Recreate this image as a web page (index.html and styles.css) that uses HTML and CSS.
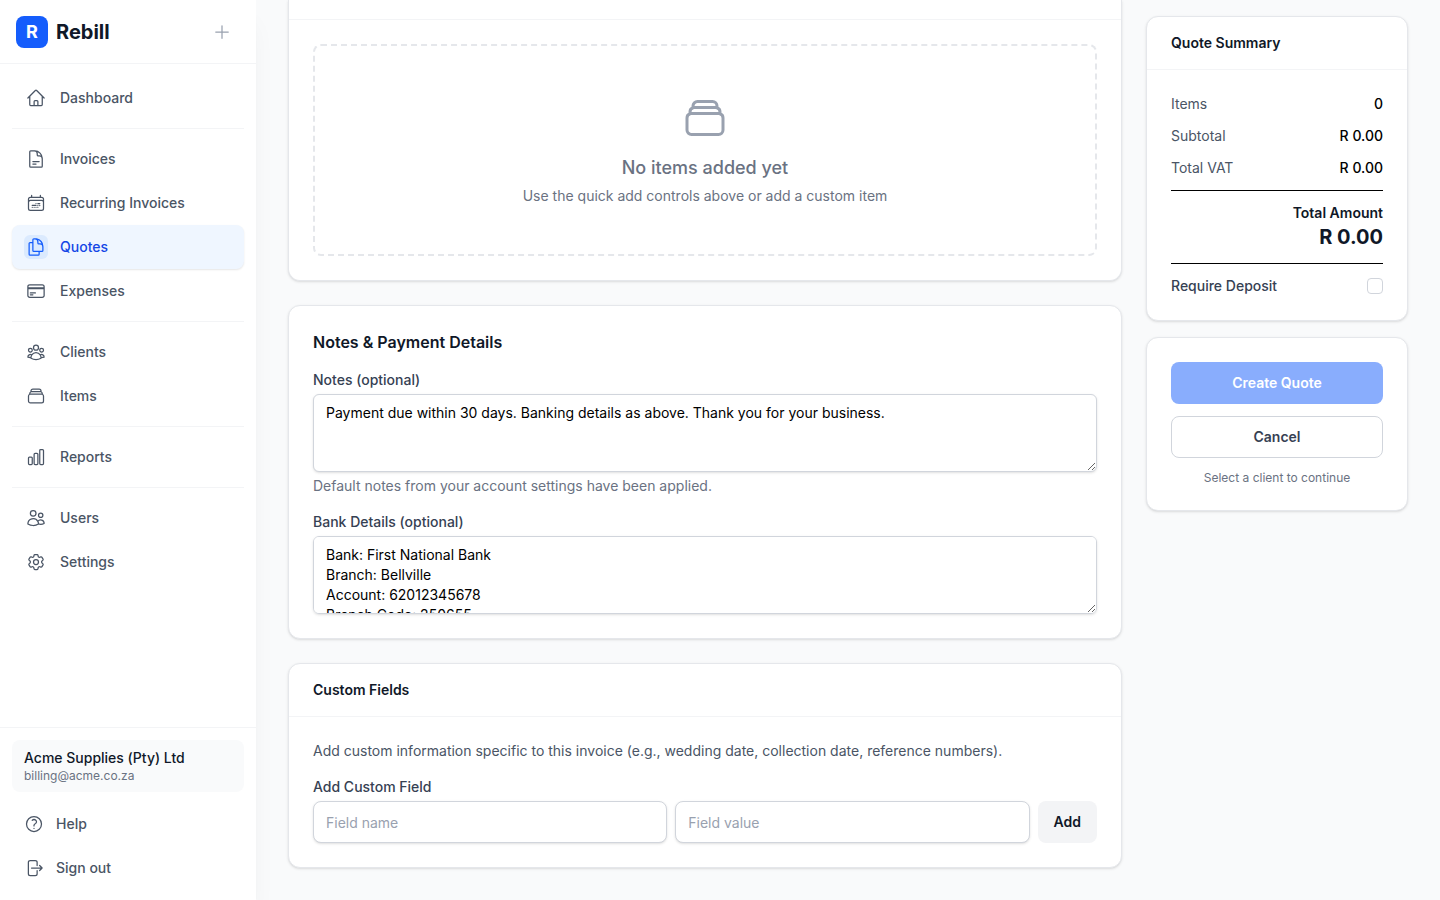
FILE: index.html
```html
<!DOCTYPE html>
<html lang="en">
<head>
    <meta charset="UTF-8">
    <meta name="viewport" content="width=device-width, initial-scale=1.0">
    <title>New Quote - Rebill</title>
    <link rel="stylesheet" href="styles.css">
</head>
<body>
    <div class="layout">
        <!-- Sidebar -->
        <aside class="sidebar">
            <div class="sidebar-header">
                <div class="logo">R</div>
                <span class="brand">Rebill</span>
                <button type="button" class="new-btn" aria-label="Create new">
                    <svg class="icon" viewBox="0 0 24 24"><path d="M12 4.5v15m7.5-7.5h-15"/></svg>
                </button>
            </div>

            <nav class="nav">
                <div class="nav-group">
                    <a href="#" class="nav-link">
                        <span class="nav-icon"><svg class="icon" viewBox="0 0 24 24"><path d="m2.25 12 8.954-8.955c.44-.439 1.152-.439 1.591 0L21.75 12M4.5 9.75v10.125c0 .621.504 1.125 1.125 1.125H9.75v-4.875c0-.621.504-1.125 1.125-1.125h2.25c.621 0 1.125.504 1.125 1.125V21h4.125c.621 0 1.125-.504 1.125-1.125V9.75M8.25 21h8.25"/></svg></span>
                        Dashboard
                    </a>
                </div>
                <div class="nav-group">
                    <a href="#" class="nav-link">
                        <span class="nav-icon"><svg class="icon" viewBox="0 0 24 24"><path d="M19.5 14.25v-2.625a3.375 3.375 0 0 0-3.375-3.375h-1.5A1.125 1.125 0 0 1 13.5 7.125v-1.5a3.375 3.375 0 0 0-3.375-3.375H8.25m0 12.75h7.5m-7.5 3H12M10.5 2.25H5.625c-.621 0-1.125.504-1.125 1.125v17.25c0 .621.504 1.125 1.125 1.125h12.75c.621 0 1.125-.504 1.125-1.125V11.25a9 9 0 0 0-9-9Z"/></svg></span>
                        Invoices
                    </a>
                    <a href="#" class="nav-link">
                        <span class="nav-icon"><svg class="icon" viewBox="0 0 24 24"><path d="M6.75 2.994v2.25m10.5-2.25v2.25m-14.252 13.5V7.491a2.25 2.25 0 0 1 2.25-2.25h13.5a2.25 2.25 0 0 1 2.25 2.25v11.251m-18 0a2.25 2.25 0 0 0 2.25 2.25h13.5a2.25 2.25 0 0 0 2.25-2.25m-18 0v-7.5a2.25 2.25 0 0 1 2.25-2.25h13.5a2.25 2.25 0 0 1 2.25 2.25v7.5m-6.75-6h2.25m-9 2.25h4.5m.002-2.25h.005v.006H12v-.006Zm-.001 4.5h.006v.006h-.006v-.005Zm-2.25.001h.005v.006H9.75v-.006Zm-2.25 0h.005v.005h-.006v-.005Zm6.75-2.247h.005v.005h-.005v-.005Zm0 2.247h.006v.006h-.006v-.006Zm2.25-2.248h.006V15H16.5v-.005Z"/></svg></span>
                        Recurring Invoices
                    </a>
                    <a href="#" class="nav-link active">
                        <span class="nav-icon"><svg class="icon" viewBox="0 0 24 24"><path d="M15.75 17.25v3.375c0 .621-.504 1.125-1.125 1.125h-9.75a1.125 1.125 0 0 1-1.125-1.125V7.875c0-.621.504-1.125 1.125-1.125H6.75a9.06 9.06 0 0 1 1.5.124m7.5 10.376h3.375c.621 0 1.125-.504 1.125-1.125V11.25c0-4.46-3.243-8.161-7.5-8.876a9.06 9.06 0 0 0-1.5-.124H9.375c-.621 0-1.125.504-1.125 1.125v3.5m7.5 10.375H9.375a1.125 1.125 0 0 1-1.125-1.125v-9.25m12 6.625v-1.875a3.375 3.375 0 0 0-3.375-3.375h-1.5a1.125 1.125 0 0 1-1.125-1.125v-1.5a3.375 3.375 0 0 0-3.375-3.375H9.75"/></svg></span>
                        Quotes
                    </a>
                    <a href="#" class="nav-link">
                        <span class="nav-icon"><svg class="icon" viewBox="0 0 24 24"><path d="M2.25 8.25h19.5M2.25 9h19.5m-16.5 5.25h6m-6 2.25h3m-3.75 3h15a2.25 2.25 0 0 0 2.25-2.25V6.75A2.25 2.25 0 0 0 19.5 4.5h-15a2.25 2.25 0 0 0-2.25 2.25v10.5A2.25 2.25 0 0 0 4.5 19.5Z"/></svg></span>
                        Expenses
                    </a>
                </div>
                <div class="nav-group">
                    <a href="#" class="nav-link">
                        <span class="nav-icon"><svg class="icon" viewBox="0 0 24 24"><path d="M18 18.72a9.094 9.094 0 0 0 3.741-.479 3 3 0 0 0-4.682-2.72m.94 3.198.001.031c0 .225-.012.447-.037.666A11.944 11.944 0 0 1 12 21c-2.17 0-4.207-.576-5.963-1.584A6.062 6.062 0 0 1 6 18.719m12 0a5.971 5.971 0 0 0-.941-3.197m0 0A5.995 5.995 0 0 0 12 12.75a5.995 5.995 0 0 0-5.058 2.772m0 0a3 3 0 0 0-4.681 2.72 8.986 8.986 0 0 0 3.74.477m.94-3.197a5.971 5.971 0 0 0-.94 3.197M15 6.75a3 3 0 1 1-6 0 3 3 0 0 1 6 0Zm6 3a2.25 2.25 0 1 1-4.5 0 2.25 2.25 0 0 1 4.5 0Zm-13.5 0a2.25 2.25 0 1 1-4.5 0 2.25 2.25 0 0 1 4.5 0Z"/></svg></span>
                        Clients
                    </a>
                    <a href="#" class="nav-link">
                        <span class="nav-icon"><svg class="icon" viewBox="0 0 24 24"><path d="M6 6.878V6a2.25 2.25 0 0 1 2.25-2.25h7.5A2.25 2.25 0 0 1 18 6v.878m-12 0c.235-.083.487-.128.75-.128h10.5c.263 0 .515.045.75.128m-12 0A2.25 2.25 0 0 0 4.5 9v.878m13.5-3A2.25 2.25 0 0 1 19.5 9v.878m0 0a2.246 2.246 0 0 0-.75-.128H5.25c-.263 0-.515.045-.75.128m15 0A2.25 2.25 0 0 1 21 12v6a2.25 2.25 0 0 1-2.25 2.25H5.25A2.25 2.25 0 0 1 3 18v-6c0-.98.626-1.813 1.5-2.122"/></svg></span>
                        Items
                    </a>
                </div>
                <div class="nav-group">
                    <a href="#" class="nav-link">
                        <span class="nav-icon"><svg class="icon" viewBox="0 0 24 24"><path d="M3 13.125C3 12.504 3.504 12 4.125 12h2.25c.621 0 1.125.504 1.125 1.125v6.75C7.5 20.496 6.996 21 6.375 21h-2.25A1.125 1.125 0 0 1 3 19.875v-6.75ZM9.75 8.625c0-.621.504-1.125 1.125-1.125h2.25c.621 0 1.125.504 1.125 1.125v11.25c0 .621-.504 1.125-1.125 1.125h-2.25a1.125 1.125 0 0 1-1.125-1.125V8.625ZM16.5 4.125c0-.621.504-1.125 1.125-1.125h2.25C20.496 3 21 3.504 21 4.125v15.75c0 .621-.504 1.125-1.125 1.125h-2.25a1.125 1.125 0 0 1-1.125-1.125V4.125Z"/></svg></span>
                        Reports
                    </a>
                </div>
                <div class="nav-group">
                    <a href="#" class="nav-link">
                        <span class="nav-icon"><svg class="icon" viewBox="0 0 24 24"><path d="M15 19.128a9.38 9.38 0 0 0 2.625.372 9.337 9.337 0 0 0 4.121-.952 4.125 4.125 0 0 0-7.533-2.493M15 19.128v-.003c0-1.113-.285-2.16-.786-3.07M15 19.128v.106A12.318 12.318 0 0 1 8.624 21c-2.331 0-4.512-.645-6.374-1.766l-.001-.109a6.375 6.375 0 0 1 11.964-3.07M12 6.375a3.375 3.375 0 1 1-6.75 0 3.375 3.375 0 0 1 6.75 0Zm8.25 2.25a2.625 2.625 0 1 1-5.25 0 2.625 2.625 0 0 1 5.25 0Z"/></svg></span>
                        Users
                    </a>
                    <a href="#" class="nav-link">
                        <span class="nav-icon"><svg class="icon" viewBox="0 0 24 24"><path d="M9.594 3.94c.09-.542.56-.94 1.11-.94h2.593c.55 0 1.02.398 1.11.94l.213 1.281c.063.374.313.686.645.87.074.04.147.083.22.127.325.196.72.257 1.075.124l1.217-.456a1.125 1.125 0 0 1 1.37.49l1.296 2.247a1.125 1.125 0 0 1-.26 1.431l-1.003.827c-.293.241-.438.613-.43.992a7.723 7.723 0 0 1 0 .255c-.008.378.137.75.43.991l1.004.827c.424.35.534.955.26 1.43l-1.298 2.247a1.125 1.125 0 0 1-1.369.491l-1.217-.456c-.355-.133-.75-.072-1.076.124a6.47 6.47 0 0 1-.22.128c-.331.183-.581.495-.644.869l-.213 1.281c-.09.543-.56.94-1.11.94h-2.594c-.55 0-1.019-.398-1.11-.94l-.213-1.281c-.062-.374-.312-.686-.644-.87a6.52 6.52 0 0 1-.22-.127c-.325-.196-.72-.257-1.076-.124l-1.217.456a1.125 1.125 0 0 1-1.369-.49l-1.297-2.247a1.125 1.125 0 0 1 .26-1.431l1.004-.827c.292-.24.437-.613.43-.991a6.932 6.932 0 0 1 0-.255c.007-.38-.138-.751-.43-.992l-1.004-.827a1.125 1.125 0 0 1-.26-1.43l1.297-2.247a1.125 1.125 0 0 1 1.37-.491l1.216.456c.356.133.751.072 1.076-.124.072-.044.146-.086.22-.128.332-.183.582-.495.644-.869l.214-1.28Z"/><path d="M15 12a3 3 0 1 1-6 0 3 3 0 0 1 6 0Z"/></svg></span>
                        Settings
                    </a>
                </div>
            </nav>

            <div class="sidebar-footer">
                <div class="account">
                    <div class="account-name">Acme Supplies (Pty) Ltd</div>
                    <div class="account-email">billing@acme.co.za</div>
                </div>
                <a href="#" class="footer-link">
                    <svg class="icon" viewBox="0 0 24 24"><path d="M9.879 7.519c1.171-1.025 3.071-1.025 4.242 0 1.172 1.025 1.172 2.687 0 3.712-.203.179-.43.326-.67.442-.745.361-1.45.999-1.45 1.827v.75M21 12a9 9 0 1 1-18 0 9 9 0 0 1 18 0Zm-9 5.25h.008v.008H12v-.008Z"/></svg>
                    Help
                </a>
                <button type="button" class="footer-link">
                    <svg class="icon" viewBox="0 0 24 24"><path d="M15.75 9V5.25A2.25 2.25 0 0 0 13.5 3h-6a2.25 2.25 0 0 0-2.25 2.25v13.5A2.25 2.25 0 0 0 7.5 21h6a2.25 2.25 0 0 0 2.25-2.25V15m3 0 3-3m0 0-3-3m3 3H9"/></svg>
                    Sign out
                </button>
            </div>
        </aside>

        <!-- Quote form -->
        <main class="main">
            <form class="form-grid">
                <div class="form-main">
                    <section class="card items-card">
                        <div class="items-bar"></div>
                        <div class="card-body">
                            <div class="empty-state">
                                <svg class="icon empty-icon" viewBox="0 0 24 24"><path d="M6 6.878V6a2.25 2.25 0 0 1 2.25-2.25h7.5A2.25 2.25 0 0 1 18 6v.878m-12 0c.235-.083.487-.128.75-.128h10.5c.263 0 .515.045.75.128m-12 0A2.25 2.25 0 0 0 4.5 9v.878m13.5-3A2.25 2.25 0 0 1 19.5 9v.878m0 0a2.246 2.246 0 0 0-.75-.128H5.25c-.263 0-.515.045-.75.128m15 0A2.25 2.25 0 0 1 21 12v6a2.25 2.25 0 0 1-2.25 2.25H5.25A2.25 2.25 0 0 1 3 18v-6c0-.98.626-1.813 1.5-2.122"/></svg>
                                <p class="empty-title">No items added yet</p>
                                <p class="empty-text">Use the quick add controls above or add a custom item</p>
                            </div>
                        </div>
                    </section>

                    <section class="card">
                        <div class="card-body">
                            <h2 class="section-title">Notes &amp; Payment Details</h2>
                            <div class="field">
                                <label for="notes">Notes (optional)</label>
                                <textarea id="notes" class="input" rows="3">Payment due within 30 days. Banking details as above. Thank you for your business.</textarea>
                                <p class="hint">Default notes from your account settings have been applied.</p>
                            </div>
                            <div class="field">
                                <label for="bank">Bank Details (optional)</label>
                                <textarea id="bank" class="input" rows="3">Bank: First National Bank
Branch: Bellville
Account: 62012345678
Branch Code: 250655</textarea>
                            </div>
                        </div>
                    </section>

                    <section class="card">
                        <div class="card-header">
                            <h3>Custom Fields</h3>
                        </div>
                        <div class="card-body">
                            <p class="intro">Add custom information specific to this invoice (e.g., wedding date, collection date, reference numbers).</p>
                            <div class="field">
                                <label for="field-name">Add Custom Field</label>
                                <div class="field-row">
                                    <input type="text" id="field-name" class="input" placeholder="Field name">
                                    <input type="text" class="input" placeholder="Field value" aria-label="Field value">
                                    <button type="button" class="btn btn-add">Add</button>
                                </div>
                            </div>
                        </div>
                    </section>
                </div>

                <div class="form-side">
                    <section class="card">
                        <div class="card-header">
                            <h3>Quote Summary</h3>
                        </div>
                        <div class="card-body summary">
                            <div class="summary-row"><span>Items</span><strong>0</strong></div>
                            <div class="summary-row"><span>Subtotal</span><strong>R 0.00</strong></div>
                            <div class="summary-row"><span>Total VAT</span><strong>R 0.00</strong></div>
                            <div class="total">
                                <div class="total-label">Total Amount</div>
                                <div class="total-value">R 0.00</div>
                            </div>
                            <div class="deposit">
                                <label for="deposit">Require Deposit</label>
                                <input type="checkbox" id="deposit" class="checkbox">
                            </div>
                        </div>
                    </section>

                    <section class="card">
                        <div class="card-body actions">
                            <button type="submit" class="btn btn-primary" disabled>Create Quote</button>
                            <button type="button" class="btn btn-outline">Cancel</button>
                            <p class="action-note">Select a client to continue</p>
                        </div>
                    </section>
                </div>
            </form>
        </main>
    </div>
</body>
</html>
```

FILE: styles.css
```css
* {
    box-sizing: border-box;
}
body {
    margin: 0;
    background: #f9fafb;
    color: #000000;
    font-family: 'Inter', sans-serif;
    font-size: 14px;
    line-height: 20px;
}
h2, h3, p {
    margin: 0;
}
a {
    color: inherit;
    text-decoration: none;
}
button, input, textarea {
    font: inherit;
    color: inherit;
}
button {
    border: none;
    background: none;
    cursor: pointer;
}
.icon {
    width: 20px;
    height: 20px;
    flex-shrink: 0;
    fill: none;
    stroke: currentColor;
    stroke-width: 1.5;
    stroke-linecap: round;
    stroke-linejoin: round;
}
.layout {
    display: flex;
    min-height: 100vh;
}

/* Sidebar */
.sidebar {
    position: sticky;
    top: 0;
    display: flex;
    flex-direction: column;
    flex-shrink: 0;
    width: 256px;
    height: 100vh;
    background: #ffffff;
    box-shadow: 0 20px 25px -5px rgba(0, 0, 0, 0.05), 0 8px 10px -6px rgba(0, 0, 0, 0.05);
}
.sidebar-header {
    display: flex;
    align-items: center;
    gap: 8px;
    height: 64px;
    padding: 0 16px;
    border-bottom: 1px solid #f3f4f6;
}
.logo {
    width: 32px;
    height: 32px;
    border-radius: 8px;
    background: #155dfc;
    color: #ffffff;
    font-size: 18px;
    font-weight: 700;
    line-height: 32px;
    text-align: center;
}
.brand {
    color: #101828;
    font-size: 20px;
    font-weight: 700;
    line-height: 28px;
}
.new-btn {
    display: flex;
    margin-left: auto;
    padding: 8px;
    color: #99a1af;
}
.nav {
    flex: 1;
    padding: 12px;
    overflow-y: auto;
}
.nav-group + .nav-group {
    margin-top: 8px;
    padding-top: 8px;
    border-top: 1px solid #f3f4f6;
}
.nav-link {
    display: flex;
    align-items: center;
    gap: 12px;
    height: 44px;
    padding: 0 12px;
    border-radius: 8px;
    color: #4a5565;
    font-weight: 500;
}
.nav-icon {
    display: flex;
    padding: 2px;
    border-radius: 6px;
}
.nav-link.active {
    background: #eff6ff;
    color: #1447e6;
    box-shadow: 0 1px 2px rgba(0, 0, 0, 0.1);
}
.nav-link.active .nav-icon {
    background: #dbeafe;
    color: #155dfc;
}
.sidebar-footer {
    display: flex;
    flex-direction: column;
    gap: 4px;
    padding: 12px;
    border-top: 1px solid #f3f4f6;
}
.account {
    margin-bottom: 8px;
    padding: 8px 12px;
    border-radius: 8px;
    background: #f9fafb;
}
.account-name {
    color: #101828;
    font-weight: 500;
}
.account-email {
    color: #6a7282;
    font-size: 12px;
    line-height: 16px;
}
.footer-link {
    display: flex;
    align-items: center;
    gap: 12px;
    height: 40px;
    padding: 0 12px;
    color: #4a5565;
    font-weight: 500;
}

/* Form layout */
.main {
    flex: 1;
    min-width: 0;
    padding: 0 32px 32px;
}
.form-grid {
    display: grid;
    grid-template-columns: repeat(12, minmax(0, 1fr));
    gap: 24px;
    align-items: start;
}
.form-main {
    grid-column: span 9;
    display: flex;
    flex-direction: column;
    gap: 24px;
}
.form-side {
    grid-column: span 3;
    position: sticky;
    top: 16px;
    display: flex;
    flex-direction: column;
    gap: 16px;
    margin-top: 16px;
}

/* Cards */
.card {
    border: 1px solid #e5e7eb;
    border-radius: 12px;
    background: #ffffff;
    box-shadow: 0 1px 3px rgba(0, 0, 0, 0.1), 0 1px 2px -1px rgba(0, 0, 0, 0.1);
}
.card-header {
    padding: 16px 24px;
    border-bottom: 1px solid #f3f4f6;
}
.card-header h3 {
    color: #101828;
    font-size: 14px;
    font-weight: 600;
}
.card-body {
    padding: 24px;
}
.items-card {
    border-top: none;
    border-radius: 0 0 12px 12px;
}
.items-bar {
    height: 20px;
    border-bottom: 1px solid #f3f4f6;
}
.empty-state {
    display: flex;
    flex-direction: column;
    align-items: center;
    padding: 48px 24px;
    border: 2px dashed #e5e7eb;
    border-radius: 8px;
    color: #6a7282;
    text-align: center;
}
.empty-icon {
    width: 48px;
    height: 48px;
    color: #99a1af;
}
.empty-title {
    margin: 12px 0 4px;
    font-size: 18px;
    font-weight: 500;
    line-height: 28px;
}

/* Fields */
.section-title {
    color: #101828;
    font-size: 16px;
    font-weight: 600;
    line-height: 24px;
}
.field {
    margin-top: 16px;
}
label {
    display: block;
    color: #364153;
    font-weight: 500;
}
.input {
    display: block;
    width: 100%;
    margin: 4px 0 0;
    padding: 8px 12px;
    border: 1px solid #d1d5dc;
    border-radius: 6px;
    background: #ffffff;
    box-shadow: 0 1px 3px rgba(0, 0, 0, 0.1), 0 1px 2px -1px rgba(0, 0, 0, 0.1);
}
textarea.input {
    resize: vertical;
    scrollbar-width: none;
}
.input::placeholder {
    color: #99a1af;
}
.hint {
    margin-top: 4px;
    color: #6a7282;
}
.intro {
    color: #4a5565;
}
.field-row {
    display: flex;
    gap: 8px;
    margin-top: 4px;
}
.field-row .input {
    flex: 1;
    min-width: 0;
    height: 42px;
    margin: 0;
    border-radius: 8px;
}

/* Buttons */
.btn {
    height: 42px;
    padding: 0 16px;
    border-radius: 8px;
    font-weight: 600;
}
.btn-add {
    background: #f3f4f6;
    color: #101828;
}
.btn-primary {
    background: #155dfc;
    color: #ffffff;
}
.btn-primary:disabled {
    opacity: 0.5;
    cursor: not-allowed;
}
.btn-outline {
    border: 1px solid #d1d5dc;
    background: #ffffff;
    color: #364153;
}

/* Summary */
.summary, .actions {
    display: flex;
    flex-direction: column;
    gap: 12px;
}
.summary-row {
    display: flex;
    justify-content: space-between;
    color: #4a5565;
}
.summary-row strong {
    color: #000000;
    font-weight: 500;
}
.total {
    padding: 12px 0;
    border-top: 1px solid #000000;
    border-bottom: 1px solid #000000;
    color: #101828;
    text-align: right;
}
.total-label {
    font-weight: 600;
}
.total-value {
    font-size: 20px;
    font-weight: 700;
    line-height: 28px;
}
.deposit {
    display: flex;
    align-items: center;
    justify-content: space-between;
}
.checkbox {
    appearance: none;
    width: 16px;
    height: 16px;
    margin: 0;
    border: 1px solid #d1d5dc;
    border-radius: 4px;
    background: #ffffff;
}
.checkbox:checked {
    border-color: #155dfc;
    background: #155dfc;
}
.action-note {
    color: #6a7282;
    font-size: 12px;
    line-height: 16px;
    text-align: center;
}
```
